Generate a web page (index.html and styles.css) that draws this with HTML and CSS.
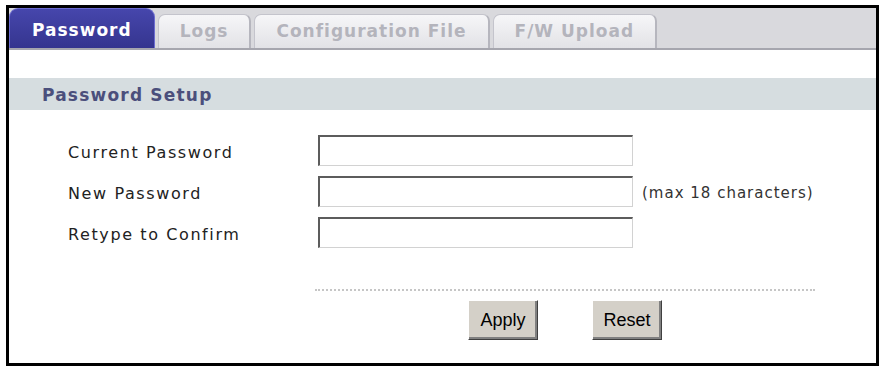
FILE: index.html
```html
<!DOCTYPE html>
<html lang="en">
<head>
	<meta charset="UTF-8">
	<title>Password</title>
	<link rel="stylesheet" href="styles.css">
</head>
<body>
	<div class="frame">
		<ul class="tabs">
			<li class="tab active">Password</li>
			<li class="tab">Logs</li>
			<li class="tab">Configuration File</li>
			<li class="tab">F/W Upload</li>
		</ul>
		<div class="content">
			<h2 class="band">Password Setup</h2>
			<div class="form">
				<label class="lbl">Current Password</label>
				<input type="password" class="field">
				<span></span>
				<label class="lbl">New Password</label>
				<input type="password" class="field">
				<span class="note">(max 18 characters)</span>
				<label class="lbl">Retype to Confirm</label>
				<input type="password" class="field">
				<span></span>
			</div>
			<div class="actions">
				<button class="btn">Apply</button>
				<button class="btn">Reset</button>
			</div>
		</div>
	</div>
</body>
</html>
```

FILE: styles.css
```css
* {
	box-sizing: border-box;
}
body {
	margin: 0;
	background: #fff;
	font-family: "DejaVu Sans", Verdana, sans-serif;
}
.frame {
	width: 873px;
	height: 361px;
	margin: 5px 0 0 6px;
	border: 3px solid #000;
}
.tabs {
	display: flex;
	align-items: flex-end;
	gap: 3px;
	height: 42px;
	margin: 0;
	padding: 0;
	list-style: none;
	background: #d9d9dd;
	border-bottom: 2px solid #a6a6ae;
}
.tab {
	height: 34px;
	padding: 6px 21px 0;
	font-size: 17px;
	font-weight: bold;
	letter-spacing: 1px;
	color: #b4b4bc;
	background: linear-gradient(#f6f6f8, #e2e2e6);
	border: 1px solid #c4c4cc;
	border-right: 2px solid #b6b6be;
	border-bottom: none;
	border-radius: 7px 7px 0 0;
}
.tab.active {
	height: 40px;
	padding: 11px 22px 0;
	color: #fff;
	background: linear-gradient(#4646ac, #35358f);
	border: 1px solid #6c6cd0;
	border-bottom: none;
	border-radius: 9px 9px 0 0;
}
.content {
	padding-top: 28px;
}
.band {
	height: 32px;
	margin: 0;
	padding: 7px 0 0 33px;
	font-size: 17px;
	letter-spacing: 1.2px;
	color: #4b4f7c;
	background: #d6dde0;
}
.form {
	display: grid;
	grid-template-columns: 250px 315px auto;
	grid-auto-rows: 31px;
	row-gap: 10px;
	align-items: center;
	padding: 25px 0 0 59px;
}
.lbl {
	padding-top: 3px;
	font-size: 16px;
	letter-spacing: 1.6px;
	color: #222;
}
.field {
	height: 31px;
	width: 315px;
	border-style: solid;
	border-width: 2px 1px 1px 2px;
	border-color: #5c5c5c #d2d2d2 #d2d2d2 #5c5c5c;
	background: #fff;
}
.note {
	padding: 3px 0 0 9px;
	font-size: 15px;
	letter-spacing: 1px;
	color: #333;
}
.actions {
	display: flex;
	justify-content: center;
	gap: 54px;
	width: 500px;
	margin: 41px 0 0 306px;
	padding-top: 9px;
	border-top: 2px dotted #c6c6c6;
}
.btn {
	width: 70px;
	height: 40px;
	padding: 0;
	font-family: "Liberation Sans", Arial, sans-serif;
	font-size: 18px;
	color: #000;
	background: #d4d0c8;
	border: 1px solid;
	border-color: #fff #404040 #404040 #fff;
	box-shadow: inset -2px -2px #808080;
}
```
